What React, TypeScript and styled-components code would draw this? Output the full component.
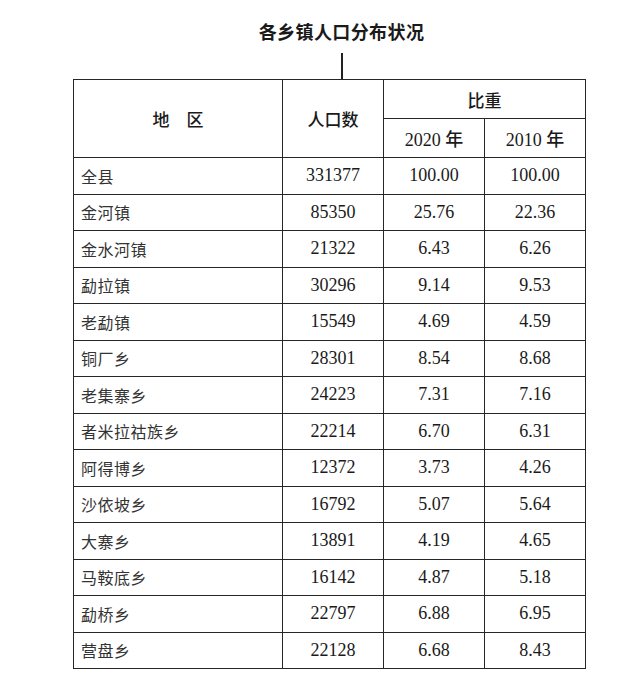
import styled, { createGlobalStyle } from "styled-components";

const GlobalStyle = createGlobalStyle`
  html, body {
    margin: 0;
    padding: 0;
    background: #ffffff;
  }
  body {
    font-family: "Liberation Serif", "Noto Sans CJK SC", serif;
    color: #1e1e1e;
  }
`;

const Page = styled.div`
  width: 641px;
  height: 681px;
  overflow: hidden;
  background: #fff;
`;

const Heading = styled.div`
  display: flex;
  flex-direction: column;
  align-items: center;
  padding-left: 42px;
  padding-top: 23px;
`;

const Title = styled.h2`
  margin: 0;
  font-size: 18px;
  line-height: 20px;
  font-weight: 700;
  letter-spacing: 0.4px;
  color: #1a1a1a;
`;

const Cursor = styled.div`
  width: 2px;
  height: 26px;
  margin-top: 10px;
  background: #222;
`;

const Table = styled.table`
  margin-left: 73px;
  width: 512px;
  border-collapse: collapse;
  table-layout: fixed;
`;

const Th = styled.th<{ $year?: boolean }>`
  border: 1px solid #262626;
  height: 38px;
  padding: 0;
  font-size: ${(p) => (p.$year ? "18px" : "17px")};
  font-weight: 500;
  text-align: center;
  vertical-align: middle;
  color: #1a1a1a;
  white-space: pre;
`;

const Td = styled.td<{ $name?: boolean }>`
  border: 1px solid #262626;
  height: 35.5px;
  padding: 0 0 0 ${(p) => (p.$name ? "7px" : "0")};
  font-size: ${(p) => (p.$name ? "16px" : "18px")};
  text-align: ${(p) => (p.$name ? "left" : "center")};
  vertical-align: middle;
  color: ${(p) => (p.$name ? "#333" : "#1a1a1a")};
  letter-spacing: ${(p) => (p.$name ? "0.5px" : "0")};
`;

const rows: [string, string, string, string][] = [
  ["全县", "331377", "100.00", "100.00"],
  ["金河镇", "85350", "25.76", "22.36"],
  ["金水河镇", "21322", "6.43", "6.26"],
  ["勐拉镇", "30296", "9.14", "9.53"],
  ["老勐镇", "15549", "4.69", "4.59"],
  ["铜厂乡", "28301", "8.54", "8.68"],
  ["老集寨乡", "24223", "7.31", "7.16"],
  ["者米拉祜族乡", "22214", "6.70", "6.31"],
  ["阿得博乡", "12372", "3.73", "4.26"],
  ["沙依坡乡", "16792", "5.07", "5.64"],
  ["大寨乡", "13891", "4.19", "4.65"],
  ["马鞍底乡", "16142", "4.87", "5.18"],
  ["勐桥乡", "22797", "6.88", "6.95"],
  ["营盘乡", "22128", "6.68", "8.43"],
];

export default function App() {
  return (
    <Page>
      <GlobalStyle />
      <Heading>
        <Title>各乡镇人口分布状况</Title>
        <Cursor />
      </Heading>
      <Table>
        <colgroup>
          <col style={{ width: 209 }} />
          <col style={{ width: 101 }} />
          <col style={{ width: 101 }} />
          <col style={{ width: 101 }} />
        </colgroup>
        <thead>
          <tr>
            <Th rowSpan={2}>{"地　区"}</Th>
            <Th rowSpan={2}>人口数</Th>
            <Th colSpan={2}>比重</Th>
          </tr>
          <tr>
            <Th $year>2020 年</Th>
            <Th $year>2010 年</Th>
          </tr>
        </thead>
        <tbody>
          {rows.map((r) => (
            <tr key={r[0]}>
              <Td $name>{r[0]}</Td>
              <Td>{r[1]}</Td>
              <Td>{r[2]}</Td>
              <Td>{r[3]}</Td>
            </tr>
          ))}
        </tbody>
      </Table>
    </Page>
  );
}
